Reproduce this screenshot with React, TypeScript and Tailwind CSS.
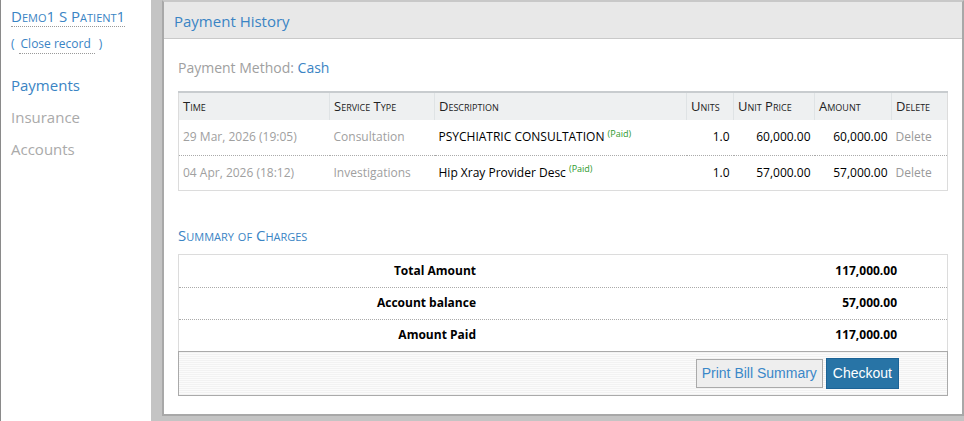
import React from "react"

const font = "font-['Open_Sans',sans-serif]"

interface ILine {
  time: string
  service: string
  description: string
  units: string
  unitPrice: string
  amount: string
}

const lines: ILine[] = [
  {
    time: "29 Mar, 2026 (19:05)",
    service: "Consultation",
    description: "PSYCHIATRIC CONSULTATION",
    units: "1.0",
    unitPrice: "60,000.00",
    amount: "60,000.00",
  },
  {
    time: "04 Apr, 2026 (18:12)",
    service: "Investigations",
    description: "Hip Xray Provider Desc",
    units: "1.0",
    unitPrice: "57,000.00",
    amount: "57,000.00",
  },
]

const summary = [
  { label: "Total Amount", value: "117,000.00" },
  { label: "Account balance", value: "57,000.00" },
  { label: "Amount Paid", value: "117,000.00" },
]

const headCls = "h-[28px] px-[4px] text-left font-normal text-[13px] text-[#222] [font-variant:small-caps] border-l border-[#dfe3e5] first:border-l-0"

const Sidebar = () => (
  <div className={`w-[151px] shrink-0 bg-white border-l border-[#8a8a8a] pl-[10px] pt-[6px] ${font}`}>
    <div className="text-[15px] leading-[20px] text-[#3a84c4] [font-variant:small-caps] border-b border-dotted border-[#999] w-fit">
      Demo1 S Patient1
    </div>
    <div className="mt-[8px] text-[12px] text-[#3a84c4] flex gap-[4px]">
      <span>(</span>
      <span className="border-b border-dotted border-[#999] pl-[2px] pr-[4px]">Close record</span>
      <span>)</span>
    </div>
    <div className="mt-[21px] flex flex-col gap-[12px] text-[15px] leading-[20px]">
      <span className="text-[#3a84c4]">Payments</span>
      <span className="text-[#aaa]">Insurance</span>
      <span className="text-[#aaa]">Accounts</span>
    </div>
  </div>
)

export default function App() {
  return (
    <div className="flex h-[421px] w-[964px] overflow-hidden">
      <Sidebar />
      <div className="flex-1 bg-[#c4c4c4] pl-[11px] pr-[1px] pb-[5px]">
        <div className={`h-full bg-white border-2 border-[#a8a8a8] border-t-[#c8c8c8] ${font}`}>
          <div className="h-[37px] bg-[#e8e8e8] border-b border-[#c9c9c9] flex items-center pl-[10px] pt-[2px] text-[15px] text-[#3a84c4]">
            Payment History
          </div>

          <div className="px-[14px]">
            <div className="mt-[19px] text-[14px] leading-[20px]">
              <span className="text-[#a0a0a0]">Payment Method: </span>
              <span className="text-[#3a84c4]">Cash</span>
            </div>

            <table className="mt-[13px] w-[770px] border-collapse border border-[#dcdcdc] border-t-2 border-t-[#c8cccf] text-[12px]">
              <thead className="bg-[#eef0f1]">
                <tr>
                  <th className={`${headCls} w-[151px]`}>Time</th>
                  <th className={`${headCls} w-[105px]`}>Service Type</th>
                  <th className={`${headCls} w-[252px]`}>Description</th>
                  <th className={`${headCls} w-[47px]`}>Units</th>
                  <th className={`${headCls} w-[81px]`}>Unit Price</th>
                  <th className={`${headCls} w-[77px]`}>Amount</th>
                  <th className={headCls}>Delete</th>
                </tr>
              </thead>
              <tbody>
                {lines.map((line, index) => (
                  <tr key={index} className={index > 0 ? "border-t border-dotted border-[#aaa]" : ""}>
                    <td className="h-[35px] px-[4px] text-[#a0a0a0]">{line.time}</td>
                    <td className="px-[4px] text-[#a0a0a0]">{line.service}</td>
                    <td className="px-[4px] text-black">
                      {line.description}{" "}
                      <sup className="text-[9px] text-[#2e9a2e]">(Paid)</sup>
                    </td>
                    <td className="px-[4px] text-right text-black">{line.units}</td>
                    <td className="px-[4px] text-right text-black">{line.unitPrice}</td>
                    <td className="px-[4px] text-right text-black">{line.amount}</td>
                    <td className="px-[4px] text-[#999]">Delete</td>
                  </tr>
                ))}
              </tbody>
            </table>

            <div className="mt-[34px] text-[15px] leading-[20px] text-[#3a84c4] [font-variant:small-caps]">
              Summary of Charges
            </div>

            <div className="mt-[9px] w-[770px] border border-[#dcdcdc]">
              {summary.map((row, index) => (
                <div
                  key={row.label}
                  className={`h-[32px] flex items-center text-[12px] font-bold text-black ${
                    index > 0 ? "border-t border-dotted border-[#aaa]" : ""
                  }`}
                >
                  <span className="w-[297px] text-right">{row.label}</span>
                  <span className="w-[421px] text-right">{row.value}</span>
                </div>
              ))}
              <div className="h-[45px] flex items-center justify-end pr-[48px] gap-[3px] border border-[#aaa] -mx-px -mb-px bg-[repeating-linear-gradient(0deg,#f2f2f2_0px,#f2f2f2_1px,#fbfbfb_1px,#fbfbfb_2px)]">
                <button className="h-[29px] px-[5px] bg-[#eeeeee] border border-[#aaa] text-[#3a87c8] text-[14px] font-['Liberation_Sans',Arial,sans-serif]">
                  Print Bill Summary
                </button>
                <button className="h-[31px] px-[6px] bg-[#2874a6] border border-[#1c6396] text-white text-[14px] font-['Liberation_Sans',Arial,sans-serif]">
                  Checkout
                </button>
              </div>
            </div>
          </div>
        </div>
      </div>
    </div>
  )
}
